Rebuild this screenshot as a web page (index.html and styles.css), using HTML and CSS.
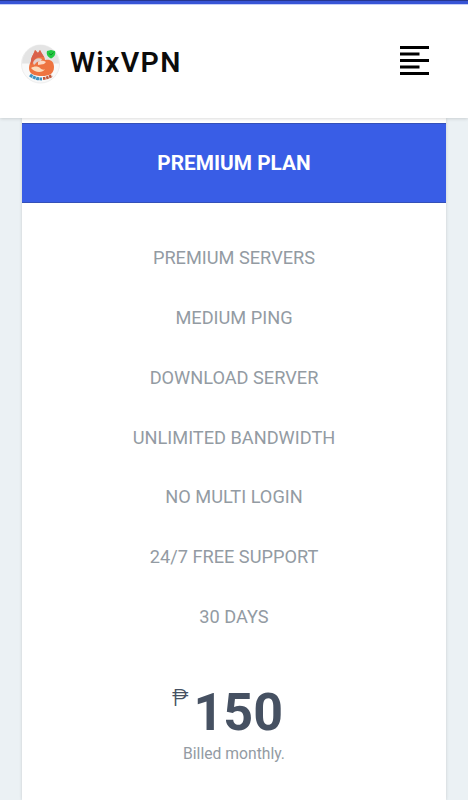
FILE: index.html
```html
<!DOCTYPE html>
<html lang="en">

<head>
    <meta charset="UTF-8">
    <meta name="viewport" content="width=device-width, initial-scale=1.0">
    <title>WixVPN</title>
    <link rel="stylesheet" href="styles.css">
</head>

<body>

    <!-- Header -->
    <header class="header">
        <a class="brand" href="#">
            <svg class="logo" viewBox="0 0 40 40">
                <circle cx="20.5" cy="20" r="19" fill="#f9f9f9" stroke="#eee"/>
                <path d="M2 19.500a18.500 18.500 0 0 1 37 0z" fill="#e4e4e4"/>
                <path d="M11 17C11 13 14 10 15 6l3 3 2-3c1 4 5 6 5 10 5-1 9 1 9 7 0 7-5 9-12 9-8 0-13-2-13-8 0-3 1-5 2-7z" fill="#ee7440"/>
                <path d="M11 17C11 13 14 10 15 6l3 3 2-3 4 7-6 0-4 3-3 5z" fill="#d9604a"/>
                <path d="M13 19c1-4 5-6 9-4l-1 2-4 1-3 3z" fill="#e2cfcb"/>
                <path d="M18 18c3-2 6-1 8 0l-2 2-6 1z" fill="#fbd9c4"/>
                <path d="M11 24c3-2 7-2 9 0s4 2 5 1c-2 4-10 4-14-1z" fill="#fcdcbc"/>
                <path d="M27 7l4-1 4 1c1 4-1 6-4 7.500-3-1.500-5-3.500-4-7.500z" fill="#22c941"/>
                <path d="M29 9.500l2 1.500 2.500-2.500" fill="none" stroke="#128c2b"/>
                <path d="M10 31q5 4 12 4" fill="none" stroke="#3f93c0" stroke-width="3" stroke-dasharray="3 .5"/>
                <path d="M23 34.500q5-.5 9-3" fill="none" stroke="#c0583a" stroke-width="3" stroke-dasharray="2.500 .6"/>
            </svg>
            <span class="brand-name">WixVPN</span>
        </a>
        <button class="menu-btn" aria-label="Menu">
            <svg width="30" height="30" viewBox="0 0 30 30">
                <path d="M0 1.500h29M0 8h19.500M0 14.500h29M0 21h19.500M0 27.500h29" stroke="#000" stroke-width="2.800"/>
            </svg>
        </button>
    </header>

    <!-- Pricing -->
    <main class="pricing">
        <div class="plan">
            <h2 class="plan-title">PREMIUM PLAN</h2>
            <ul class="features">
                <li>PREMIUM SERVERS</li>
                <li>MEDIUM PING</li>
                <li>DOWNLOAD SERVER</li>
                <li>UNLIMITED BANDWIDTH</li>
                <li>NO MULTI LOGIN</li>
                <li>24/7 FREE SUPPORT</li>
                <li>30 DAYS</li>
            </ul>
            <div class="price">
                <span class="currency">₱</span>
                <span class="amount">150</span>
            </div>
            <p class="billing">Billed monthly.</p>
        </div>
    </main>

</body>

</html>
```

FILE: styles.css
```css
* {
    margin: 0;
    padding: 0;
    box-sizing: border-box;
}

body {
    font-family: Roboto, sans-serif;
    background-color: #ebf1f4;
    color: #939ba3;
    height: 800px;
    overflow: hidden;
}

/* Header */
.header {
    position: relative;
    height: 118px;
    padding: 2px 38px 0 20px;
    border-top: 4px solid #3855d6;
    background-color: #fff;
    box-shadow: inset 0 1px 0 #c5cff8, 0 0 4px rgba(0, 0, 0, 0.22);
    display: flex;
    align-items: center;
    justify-content: space-between;
}

.header::before {
    content: "";
    position: absolute;
    top: -4px;
    left: 0;
    width: 100%;
    height: 1px;
    background-color: #26368f;
}

.brand {
    display: flex;
    align-items: center;
    gap: 10px;
    color: #0c0c0c;
    text-decoration: none;
}

.logo {
    width: 40px;
    height: 40px;
    margin-top: 4px;
}

.brand-name {
    padding-top: 2px;
    font-size: 28.5px;
    font-weight: 600;
    letter-spacing: 1.3px;
    line-height: 36px;
}

.menu-btn {
    border: none;
    background: none;
    height: 30px;
    margin-bottom: 3px;
}

/* Plan card */
.pricing {
    padding: 0 22px;
}

.plan {
    height: 682px;
    padding-top: 5px;
    background-color: #fff;
    box-shadow: 0 0 3px rgba(0, 0, 0, 0.15);
    text-align: center;
}

.plan-title {
    height: 80px;
    background-color: #395de6;
    border-top: 1px solid #3450b8;
    border-bottom: 1px solid #3450b8;
    color: #fff;
    font-size: 20.8px;
    line-height: 78px;
}

.features {
    list-style: none;
    padding-top: 25px;
}

.features li {
    font-size: 18.2px;
    line-height: 59.85px;
}

.price {
    display: flex;
    justify-content: center;
    gap: 5px;
    margin-top: 36px;
    padding-right: 13px;
    color: #465162;
    line-height: 60px;
}

.currency {
    font-size: 24px;
    font-weight: 300;
    line-height: 30px;
}

.amount {
    font-size: 52px;
    font-weight: bold;
}

.billing {
    font-size: 15.7px;
    line-height: 22px;
}
```
